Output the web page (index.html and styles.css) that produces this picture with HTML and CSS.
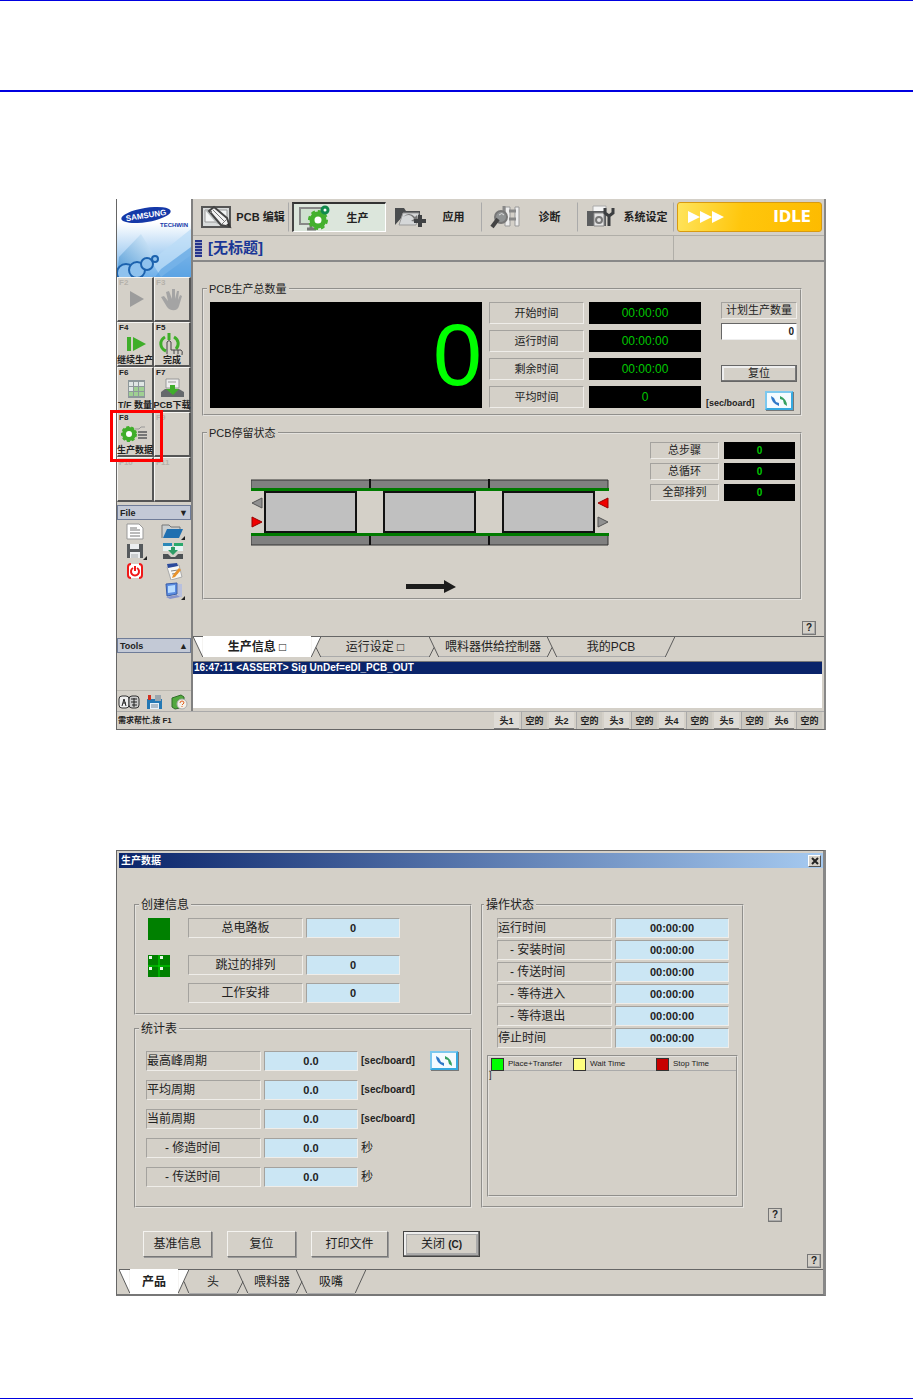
FILE: index.html
```html
<!DOCTYPE html>
<html lang="zh-CN">
	<head>
		<meta charset="UTF-8">
		<title>生产数据</title>
		<link rel="stylesheet" href="styles.css">
	</head>
	<body>
		<header class="page-head"></header>
		<main>
			<!-- 主窗口 -->
			<section class="window app">
				<aside class="sidebar">
					<svg class="logo" viewBox="0 0 74 78" preserveAspectRatio="none">
						<defs>
							<linearGradient id="sky" x1="0" y1="0" x2="0" y2="1">
								<stop offset="0.3" stop-color="#fff"/>
								<stop offset="1" stop-color="#6fb0ea"/>
							</linearGradient>
							<linearGradient id="beam" x1="0" y1="1" x2="1" y2="0">
								<stop offset="0" stop-color="#3f8fd0"/>
								<stop offset="1" stop-color="#e4f2fc"/>
							</linearGradient>
						</defs>
						<rect width="74" height="78" fill="url(#sky)"/>
						<path d="M2 58L24 35L37 56L10 78H0z" fill="url(#beam)" opacity="0.8"/>
						<path d="M34 62L74 30V56L44 78z" fill="#b9dcf6" opacity="0.7"/>
						<path d="M44 70L74 48V78H38z" fill="#4f9be0" opacity="0.6"/>
						<g fill="#8fc2ee" stroke="#1c62ae" stroke-width="2">
							<circle cx="9" cy="74" r="9"/>
							<circle cx="20" cy="71" r="8"/>
							<circle cx="30" cy="65" r="6"/>
							<circle cx="38" cy="60" r="3"/>
						</g>
						<ellipse cx="29" cy="16" rx="25" ry="7" fill="#1438a8" transform="rotate(-9 29 16)"/>
						<text x="29" y="19" class="logo-name" transform="rotate(-9 29 16)">SAMSUNG</text>
						<text x="71" y="28" class="logo-sub">TECHWIN</text>
					</svg>
					<div class="keys">
						<button class="key off"><b>F2</b>
							<svg width="34" height="26" viewBox="0 0 34 26"><path d="M12 3L26 11L12 19z" fill="#9c9c9c"/></svg>
						</button>
						<button class="key off"><b>F3</b>
							<svg width="34" height="26" viewBox="0 0 34 26"><path d="M6 9l3-1 4 5-2-9 3-1 3 8V1h3v10l2-8h2l-1 9 2-5 2 1-3 10c-1 5-8 6-12 1z" fill="#a4a4a4"/></svg>
						</button>
						<button class="key"><b>F4</b>
							<svg width="34" height="22" viewBox="0 0 34 22"><path d="M9 4h4v14H9zM15 4L28 11L15 18z" fill="#3fae2a"/></svg>
							<span>继续生产</span>
						</button>
						<button class="key"><b>F5</b>
							<svg width="34" height="22" viewBox="0 0 34 22" fill="none">
								<path d="M10 4a9 8 0 0 0 1 14M19 4a9 8 0 0 1 2 12" stroke="#3fae2a" stroke-width="3"/>
								<path d="M14 0v7" stroke="#3fae2a" stroke-width="3"/>
								<path d="M12 21V9q2-3 4 0v8h10q2 1 1 5M19 17v4M23 17v4" stroke="#444"/>
							</svg>
							<span>完成</span>
						</button>
						<button class="key"><b>F6</b>
							<svg width="34" height="22" viewBox="0 0 34 22">
								<rect x="10" y="2" width="17" height="18" fill="#8d979a"/>
								<path d="M11 4h4v4h-4zM16 4h4v4h-4zM21 4h5v4h-5zM11 9h4v4h-4z" fill="#dfe6e4"/>
								<path d="M16 9h4v4h-4zM21 9h5v4h-5zM11 14h4v4h-4zM16 14h4v4h-4zM21 14h5v4h-5z" fill="#9fd092"/>
							</svg>
							<span>T/F 数量</span>
						</button>
						<button class="key"><b>F7</b>
							<svg width="34" height="22" viewBox="0 0 34 22">
								<path d="M11 1h13v9H11z" fill="#eee" stroke="#999"/>
								<path d="M6 14l4-3h3l3 4h3l3-4h2l5 3v5H6z" fill="#66696c"/>
								<path d="M15 7h5v4h4l-6 6-7-6h4z" fill="#3fae2a"/>
								<path d="M13 4h8" stroke="#999"/>
							</svg>
							<span>PCB下载</span>
						</button>
						<button class="key marked"><b>F8</b>
							<svg width="34" height="22" viewBox="0 0 34 22" fill="none">
								<circle cx="11" cy="11" r="5" fill="#fff" stroke="#3fae2a" stroke-width="4"/>
								<circle cx="11" cy="11" r="7" stroke="#3fae2a" stroke-width="2" stroke-dasharray="3 2"/>
								<path d="M17 6h4l2-2h4" stroke="#999"/>
								<path d="M20 9h9M20 12h9M20 15h9" stroke="#777" stroke-width="2"/>
							</svg>
							<span>生产数据</span>
						</button>
						<button class="key off"><b>F9</b></button>
						<button class="key off"><b>F10</b></button>
						<button class="key off"><b>F11</b></button>
					</div>
					<button class="side-bar">File<i>▼</i></button>
					<div class="side-icons">
						<svg viewBox="0 0 24 18"><path d="M4 2h12l4 4v11H4z" fill="#fff" stroke="#999"/><path d="M7 6h7M7 8h10M7 11h10M7 14h10" stroke="#777"/></svg>
						<svg viewBox="0 0 24 18"><path d="M1 16V3h7l2 2h9v3" fill="#c9ced0" stroke="#777"/><path d="M2 16L6 7h16l-4 9z" fill="#1f6fb0"/><path d="M24 14v4h-4z" fill="#222"/></svg>
						<svg viewBox="0 0 24 18"><path d="M4 2h16v14H4z" fill="#55595c"/><path d="M7 2h9v5H7zM7 10h10v6H7z" fill="#eceef0"/><path d="M8 12h7v4h-7z" fill="#c9ccce"/><path d="M24 14v4h-4z" fill="#222"/></svg>
						<svg viewBox="0 0 24 18"><path d="M2 1h9v8H2zM13 1h9v8h-9z" fill="#e6f4f4"/><path d="M2 1h9v3H2z" fill="#2a88b8"/><path d="M13 1h9v3h-9z" fill="#2aa86c"/><path d="M2 12h5l3 3h4l3-3h5v5H2z" fill="#4c5154"/><path d="M10 5h4v3h3l-5 5-5-5h3z" fill="#2e9c66"/></svg>
						<svg viewBox="0 0 24 18" fill="none"><rect x="5" y="2" width="14" height="14" rx="3" fill="#fff"/><path d="M8 2q-3 0-3 3v8q0 3 3 3M16 2q3 0 3 3v8q0 3-3 3" stroke="#f01818" stroke-width="2"/><path d="M10 6a4 4 0 1 0 4 0M12 4v5" stroke="#f01818" stroke-width="2"/></svg>
						<svg viewBox="0 0 24 18"><path d="M6 5l12-2 3 12-11 3z" fill="#f7f7f4" stroke="#aaa"/><path d="M6 2l10-1 1 3-10 2z" fill="#2b4a9c"/><path d="M10 9l7-1M11 12l6-1" stroke="#888"/><path d="M18 6l2 2-6 7-3 1 1-3z" fill="#e8932c"/></svg>
						<span></span>
						<svg viewBox="0 0 24 18"><path d="M5 2l11-1v11l-10 2z" fill="#5b8ce0" stroke="#3a5da8"/><path d="M7 4l7-1v7l-7 1z" fill="#b9dcff"/><path d="M17 2h4v13h-4z" fill="#b8c0de"/><path d="M5 15l11-2 3 2-10 2z" fill="#8694cc"/><path d="M24 14v4h-4z" fill="#222"/></svg>
					</div>
					<button class="side-bar tools">Tools<i>▲</i></button>
					<div class="tray">
						<svg width="22" height="16" viewBox="0 0 22 16"><rect x="1" y="2" width="10" height="12" rx="3" fill="#eee" stroke="#333"/><rect x="11" y="2" width="10" height="12" rx="3" fill="#ccc" stroke="#333"/><path d="M4 12l2-7 2 7M5 9h3M13 5h6M13 8h6M14 11h5M16 4v9" fill="none" stroke="#222"/></svg>
						<svg width="18" height="16" viewBox="0 0 18 16"><path d="M1 5h15v10H1z" fill="#2478b4"/><path d="M4 9h9v6H4z" fill="#e8f2fa"/><path d="M5 11h7M5 13h7" stroke="#789"/><path d="M9 1h6v6H9z" fill="#9aa6ae"/><path d="M2 1h3v5H2z" fill="#d03020"/></svg>
						<svg width="18" height="16" viewBox="0 0 18 16"><path d="M2 4l9-3 3 2v10l-9 2-3-2z" fill="#52a83e" stroke="#2f6d28"/><circle cx="12" cy="10" r="5" fill="#f4f0e8" stroke="#aaa"/><path d="M10 9q0-2 2-2t2 2l-2 2M12 12v1" fill="none" stroke="#e06020"/></svg>
					</div>
				</aside>
				<div class="work">
					<nav class="toolbar">
						<button class="tool">
							<svg width="32" height="24" viewBox="0 0 32 24"><path d="M1 2h28v20H1z" fill="#d9dcdc" stroke="#555" stroke-width="2"/><path d="M4 5h22v12H4z" fill="#f3f5f5" stroke="#999"/><path d="M4 5l12 14h10L12 5z" fill="#b9bdbd"/><path d="M8 6l5-4 13 11 3 9-9-2z" fill="#f2f2f2" stroke="#444" stroke-width="2"/><path d="M12 5l12 12M9 8l2-2M21 19l5-5" stroke="#777"/><path d="M25 20l4 2-1-4z" fill="#333"/></svg>
							<span>PCB 编辑</span>
						</button>
						<button class="tool pressed">
							<svg width="32" height="26" viewBox="0 0 32 26" fill="none"><path d="M2 3h22v16H2z" fill="#cfe0cf" stroke="#888" stroke-width="2"/><path d="M9 24h9M13 19v4" stroke="#777" stroke-width="3"/><circle cx="20" cy="15" r="6" fill="#fff" stroke="#44b02e" stroke-width="5"/><circle cx="20" cy="15" r="9" stroke="#44b02e" stroke-width="2" stroke-dasharray="4 3"/><circle cx="27" cy="5" r="3" fill="#fff" stroke="#108a4c" stroke-width="3"/></svg>
							<span>生产</span>
						</button>
						<button class="tool">
							<svg width="32" height="24" viewBox="0 0 32 24"><path d="M1 20V3h9l2 3h14v5H9z" fill="#4a4c4e"/><path d="M5 20l4-12h16l-3 12z" fill="#d5d7d8" stroke="#999"/><path d="M9 12q7-5 11 2l-3 2 7 1-1-7-2 2q-6-6-12 0z" fill="#777"/><path d="M20 14h4v-4h4v4h4v4h-4v4h-4v-4h-4z" fill="#3f4143"/></svg>
							<span>应用</span>
						</button>
						<button class="tool">
							<svg width="32" height="24" viewBox="0 0 32 24" fill="none"><path d="M15 2h5v19h-5zM25 2h4v19h-4z" fill="#eee" stroke="#999"/><path d="M19 6h7M19 14h7M14 9V1" stroke="#888" stroke-width="3"/><circle cx="11" cy="12" r="6" fill="#909394" stroke="#777" stroke-width="2"/><path d="M8 14l-6 8" stroke="#444" stroke-width="4"/><path d="M9 10q3-3 5 0" stroke="#ddd"/></svg>
							<span>诊断</span>
						</button>
						<button class="tool">
							<svg width="32" height="24" viewBox="0 0 32 24" fill="none"><path d="M7 1h13v7H7z" fill="#f4f4f4" stroke="#aaa"/><path d="M1 6h19v15H1z" fill="#5b5d5f"/><path d="M8 8h10v13H8z" fill="#e2e2e2" stroke="#888"/><circle cx="13" cy="15" r="3" stroke="#777" stroke-width="2"/><path d="M19 3v5l4 3 4-3V3M23 10v11" stroke="#3c3e40" stroke-width="3"/></svg>
							<span>系统设定</span>
						</button>
						<div class="idle">
							<svg width="38" height="14" viewBox="0 0 38 14"><path d="M0 1l12 6-12 6zM12 1l12 6-12 6zM24 1l12 6-12 6z" fill="#fff"/></svg>
							<strong>IDLE</strong>
						</div>
					</nav>
					<div class="doc-title"><i></i><h1>[无标题]</h1></div>
					<div class="panel">
						<fieldset class="totals">
							<legend>PCB生产总数量</legend>
							<div class="counter">0</div>
							<div class="times">
								<span class="sunk">开始时间</span><output>00:00:00</output>
								<span class="sunk">运行时间</span><output>00:00:00</output>
								<span class="sunk">剩余时间</span><output>00:00:00</output>
								<span class="sunk">平均时间</span><output>0</output>
							</div>
							<div class="plan">
								<label class="sunk" for="plan">计划生产数量</label>
								<input id="plan" type="text" value="0">
								<button class="btn reset">复位</button>
								<div class="plan-unit"><span>[sec/board]</span>
									<button class="swap" aria-label="切换"><svg width="20" height="12" viewBox="0 0 20 12"><path d="M2 1q0 7 8 10V8L7 7 5 3z" fill="#2f78c8"/><path d="M18 11q0-7-7-10v3l3 1 1 4z" fill="#35a060"/></svg></button>
								</div>
							</div>
						</fieldset>
						<fieldset class="stay">
							<legend>PCB停留状态</legend>
							<svg class="conveyor" width="358" height="114" viewBox="0 0 358 114">
								<g stroke="#333">
									<path d="M0 1h357v10H0zM0 56h357v10H0z" fill="#808080"/>
									<path d="M119 0v12M238 0v12M119 54v12M238 54v12" stroke="#111" stroke-width="2"/>
								</g>
								<path d="M0 9h358v3H0zM0 54h358v3H0z" fill="#007a00"/>
								<g fill="#c0c0c0" stroke="#111" stroke-width="2">
									<path d="M14 13h91v40H14zM133 13h91v40h-91zM252 13h91v40h-91z"/>
								</g>
								<path d="M1 24l10-5v10zM347 38l10 5-10 5z" fill="#909090" stroke="#555"/>
								<path d="M1 38l10 5-10 5zM357 19v10l-10-5z" fill="#f00000" stroke="#900"/>
								<path d="M155 105h38v-4l12 7-12 6v-4h-38z" fill="#1c1c1c"/>
							</svg>
							<div class="steps">
								<span class="sunk">总步骤</span><output>0</output>
								<span class="sunk">总循环</span><output>0</output>
								<span class="sunk">全部排列</span><output>0</output>
							</div>
						</fieldset>
						<button class="help">?</button>
					</div>
					<nav class="tabs">
						<svg width="10" height="21" viewBox="0 0 10 21"><path d="M0 0h10v21z" fill="#fff"/><path d="M0 0l10 21" stroke="#555"/></svg>
						<button class="tab on">生产信息 □</button>
						<svg width="10" height="21" viewBox="0 0 10 21"><path d="M0 0h10L0 21z" fill="#fff"/><path d="M10 0L0 21M5 11l5 10" stroke="#555"/></svg>
						<button class="tab">运行设定 □</button>
						<svg width="10" height="21" viewBox="0 0 10 21"><path d="M0 0l10 21M5 11L0 21" stroke="#555"/></svg>
						<button class="tab">喂料器供给控制器</button>
						<svg width="10" height="21" viewBox="0 0 10 21"><path d="M0 0l10 21M5 11L0 21" stroke="#555"/></svg>
						<button class="tab">我的PCB</button>
						<svg width="10" height="21" viewBox="0 0 10 21"><path d="M10 0L0 21" stroke="#555"/></svg>
					</nav>
					<div class="log"><p>16:47:11 &lt;ASSERT&gt; Sig UnDef=eDI_PCB_OUT</p></div>
				</div>
				<footer class="status">
					<span class="hint">需求帮忙,按 F1</span>
					<span class="head">头1</span><span class="state">空的</span>
					<span class="head">头2</span><span class="state">空的</span>
					<span class="head">头3</span><span class="state">空的</span>
					<span class="head">头4</span><span class="state">空的</span>
					<span class="head">头5</span><span class="state">空的</span>
					<span class="head">头6</span><span class="state">空的</span>
				</footer>
			</section>

			<!-- 生产数据对话框 -->
			<section class="window dialog">
				<div class="caption"><h2>生产数据</h2>
					<button class="close" aria-label="关闭窗口"><svg width="8" height="8" viewBox="0 0 8 8"><path d="M1 1l6 6M7 1l-6 6" stroke="#222" stroke-width="2"/></svg></button>
				</div>
				<div class="groups">
					<div>
						<fieldset class="made">
							<legend>创建信息</legend>
							<div class="line"><svg width="22" height="22"><path d="M0 0h22v22H0z" fill="#008000"/></svg><span class="sunk">总电路板</span><output>0</output></div>
							<div class="line"><svg width="22" height="22"><path d="M0 0h22v22H0z" fill="#008000"/><path d="M11 0v22M0 11h22" stroke="#00e000"/><path d="M1 1h3v3H1zM12 1h3v3h-3zM1 12h3v3H1zM12 12h3v3h-3z" fill="#e8f8e8"/></svg><span class="sunk">跳过的排列</span><output>0</output></div>
							<div class="line"><i></i><span class="sunk">工作安排</span><output>0</output></div>
						</fieldset>
						<fieldset class="stats">
							<legend>统计表</legend>
							<div class="line"><span class="sunk">最高峰周期</span><output>0.0</output><b>[sec/board]</b>
								<button class="swap" aria-label="切换"><svg width="20" height="12" viewBox="0 0 20 12"><path d="M2 1q0 7 8 10V8L7 7 5 3z" fill="#2f78c8"/><path d="M18 11q0-7-7-10v3l3 1 1 4z" fill="#35a060"/></svg></button>
							</div>
							<div class="line"><span class="sunk">平均周期</span><output>0.0</output><b>[sec/board]</b></div>
							<div class="line"><span class="sunk">当前周期</span><output>0.0</output><b>[sec/board]</b></div>
							<div class="line"><span class="sunk sub">- 修造时间</span><output>0.0</output><em>秒</em></div>
							<div class="line"><span class="sunk sub">- 传送时间</span><output>0.0</output><em>秒</em></div>
						</fieldset>
					</div>
					<fieldset class="state-box">
						<legend>操作状态</legend>
						<div class="line"><span class="sunk">运行时间</span><output>00:00:00</output></div>
						<div class="line"><span class="sunk sub">- 安装时间</span><output>00:00:00</output></div>
						<div class="line"><span class="sunk sub">- 传送时间</span><output>00:00:00</output></div>
						<div class="line"><span class="sunk sub">- 等待进入</span><output>00:00:00</output></div>
						<div class="line"><span class="sunk sub">- 等待退出</span><output>00:00:00</output></div>
						<div class="line"><span class="sunk">停止时间</span><output>00:00:00</output></div>
						<div class="chart">
							<ul>
								<li class="place">Place+Transfer</li>
								<li class="wait">Wait Time</li>
								<li class="stop">Stop Time</li>
							</ul>
							<span>]</span>
						</div>
					</fieldset>
					<div class="side-help"><button class="help">?</button></div>
				</div>
				<div class="actions">
					<button class="btn">基准信息</button>
					<button class="btn">复位</button>
					<button class="btn wide">打印文件</button>
					<button class="btn wide default">关闭 <b>(C)</b></button>
					<button class="help">?</button>
				</div>
				<nav class="tabs">
					<svg width="11" height="24" viewBox="0 0 11 24"><path d="M0 0h11v24z" fill="#fff"/><path d="M0 0l11 24" stroke="#555"/></svg>
					<button class="tab on">产品</button>
					<svg width="11" height="24" viewBox="0 0 11 24"><path d="M0 0h11L0 24z" fill="#fff"/><path d="M11 0L0 24M6 12l5 12" stroke="#555"/></svg>
					<button class="tab">头</button>
					<svg width="11" height="24" viewBox="0 0 11 24"><path d="M0 0l11 24M6 12L0 24" stroke="#555"/></svg>
					<button class="tab">喂料器</button>
					<svg width="11" height="24" viewBox="0 0 11 24"><path d="M0 0l11 24M6 12L0 24" stroke="#555"/></svg>
					<button class="tab">吸嘴</button>
					<svg width="11" height="24" viewBox="0 0 11 24"><path d="M11 0L0 24" stroke="#555"/></svg>
				</nav>
			</section>
		</main>
		<footer class="page-foot"></footer>
	</body>
</html>
```
FILE: styles.css
```css
* {
	margin: 0;
	padding: 0;
	box-sizing: border-box;
}
body {
	display: flex;
	flex-direction: column;
	min-height: 100vh;
	background: #fff;
	color: #222;
	font-family: "Liberation Sans", "Noto Sans CJK SC", sans-serif;
	font-size: 11px;
	line-height: 14px;
}
button, input {
	font: inherit;
	color: inherit;
}
button {
	background: #d4d0c8;
	border: 0;
	white-space: nowrap;
}
svg {
	display: block;
	flex: none;
}
/*页眉页脚的蓝线*/
.page-head {
	height: 92px;
	border-top: 1px solid #0000e0;
	border-bottom: 2px solid #0000e0;
}
.page-foot {
	margin-top: auto;
	border-top: 1px solid #0000e0;
}
main {
	padding: 107px 87px 60px 116px;
}
.window {
	background: #d4d0c8;
	border: 1px solid #666;
}

/*公用控件*/
fieldset {
	min-width: 0;
	border: 2px groove #e4e2de;
}
legend {
	margin-left: -3px;
	padding: 0 2px;
}
.sunk {
	border: 1px solid;
	border-color: #a4a29e #efede9 #efede9 #a4a29e;
	text-align: center;
	white-space: nowrap;
}
output {
	text-align: center;
}
.btn {
	border: 1px solid;
	border-color: #f4f3f0 #777 #777 #f4f3f0;
	box-shadow: 1px 1px 0 #999;
}
.help {
	width: 14px;
	height: 14px;
	border: 1px solid #777;
	box-shadow: inset -1px -1px 0 #aaa;
	font-size: 10px;
	font-weight: bold;
	line-height: 12px;
}
.swap {
	display: flex;
	align-items: center;
	justify-content: center;
	width: 28px;
	height: 19px;
	background: #f4fbff;
	border: 2px solid #35a9e0;
	border-top-color: #7cc8ee;
	border-left-color: #7cc8ee;
	box-shadow: 1px 1px 0 #777;
}
.tabs {
	display: flex;
}
.tabs svg, .tab {
	border-top: 1px solid #666;
	fill: none;
}
.tab {
	width: 108px;
	border-bottom: 1px solid #aaa;
	font-size: 12px;
	line-height: 18px;
}
.tab.on {
	background: #fff;
	border-color: #fff;
	font-weight: bold;
}
.tabs::after {
	content: "";
	flex: 1;
	border-top: 1px solid #666;
}

/*主窗口*/
.app {
	display: grid;
	grid-template-columns: 76px 1fr;
	margin-bottom: 120px;
	border-width: 0 2px 1px 1px;
	border-right-color: #888;
}
.sidebar {
	display: flex;
	flex-direction: column;
	border-right: 2px solid #808080;
}
.logo {
	width: 100%;
	height: 78px;
}
.logo-name, .logo-sub {
	font-weight: bold;
	font-size: 8px;
	fill: #fff;
	text-anchor: middle;
}
.logo-sub {
	font-size: 6px;
	fill: #1438a8;
	text-anchor: end;
}
.keys {
	display: grid;
	grid-template-columns: repeat(2, minmax(0, 1fr));
	grid-auto-rows: 45px;
	margin-bottom: 3px;
}
.key {
	position: relative;
	display: flex;
	flex-direction: column;
	align-items: center;
	border: 1px solid;
	border-color: #f6f5f2 #555 #555 #f6f5f2;
	border-width: 1px 2px 2px 1px;
	font-size: 9px;
	font-weight: bold;
	line-height: 10px;
}
.key b {
	align-self: flex-start;
	padding-left: 1px;
	font-size: 8px;
}
.key.off b {
	color: #b4b1aa;
}
/*红框标出要点的按键*/
.key.marked::after {
	content: "";
	position: absolute;
	z-index: 1;
	top: -3px;
	right: -11px;
	bottom: -7px;
	left: -8px;
	border: 3px solid #f00;
}
.side-bar {
	display: flex;
	justify-content: space-between;
	align-items: center;
	height: 15px;
	padding: 0 2px;
	background: #c3c9d6;
	border: 1px solid #6f7c98;
	font-size: 9px;
	font-weight: bold;
}
.side-bar i {
	font-style: normal;
}
.side-icons {
	display: grid;
	grid-template-columns: 24px 24px;
	grid-auto-rows: 18px;
	gap: 2px 14px;
	padding: 2px 6px;
}
.tools {
	margin-top: auto;
}
.tray {
	display: flex;
	gap: 6px;
	margin-top: 37px;
	padding: 3px 0 1px 1px;
	border-top: 1px solid #bbb8b0;
}
.work {
	min-width: 0;
	padding-bottom: 3px;
}
.toolbar {
	display: flex;
	height: 37px;
	padding: 3px 2px 3px 3px;
	border-bottom: 1px solid #b0aea8;
}
.tool {
	display: flex;
	flex: 1;
	align-items: center;
	margin-right: 3px;
	padding-left: 4px;
	border: 1px solid;
	border-color: transparent #aaa transparent transparent;
	font-weight: bold;
}
.tool span {
	flex: 1;
	text-align: center;
}
.tool.pressed {
	background: #dce6dc;
	border-color: #333 #fff #fff #444;
	border-width: 2px 1px 1px 2px;
}
.idle {
	display: flex;
	align-items: center;
	justify-content: space-between;
	width: 145px;
	padding: 0 10px;
	background: linear-gradient(100deg, #ffe45c, #ffc60c 45%, #fdbb00);
	border: 1px solid #d89a10;
	border-radius: 3px;
	color: #fff;
}
.idle strong {
	font-family: "DejaVu Sans", sans-serif;
	font-size: 15px;
}
.doc-title {
	display: flex;
	align-items: center;
	gap: 6px;
	height: 26px;
	padding: 0 2px;
	border-bottom: 2px solid #888;
}
.doc-title::after {
	content: "";
	width: 148px;
	height: 24px;
	margin-left: auto;
	border-left: 1px solid #b0aea8;
}
.doc-title i {
	width: 7px;
	height: 17px;
	background: repeating-linear-gradient(#26348c 0 2px, #9aa0c4 2px 3px);
}
.doc-title h1 {
	color: #1a3796;
	font-size: 15px;
	line-height: 20px;
}
.panel {
	display: flex;
	flex-direction: column;
	height: 374px;
	padding: 20px 22px 0 9px;
}
.totals {
	display: grid;
	grid-template-columns: 1fr 212px 97px;
	height: 134px;
	padding: 6px 2px 4px 6px;
}
.counter {
	height: 106px;
	margin-right: 7px;
	background: #000;
	color: #0f0;
	font-size: 88px;
	line-height: 106px;
	text-align: right;
}
.times {
	display: grid;
	grid-template-columns: 95px 112px;
	gap: 6px 5px;
	align-content: start;
	line-height: 20px;
}
.times output, .steps output {
	background: #000;
	color: #00c800;
}
.times output {
	font-size: 12px;
	line-height: 22px;
}
.plan {
	display: flex;
	flex-direction: column;
	align-items: flex-end;
	height: 108px;
	padding-right: 1px;
}
.plan .sunk {
	width: 76px;
	height: 17px;
}
.plan input {
	width: 76px;
	height: 17px;
	margin-top: 4px;
	padding-right: 2px;
	border: 1px solid;
	border-color: #666 #eee #eee #666;
	font-size: 10px;
	font-weight: bold;
	text-align: right;
}
.reset {
	width: 76px;
	height: 17px;
	margin-top: 25px;
	border-color: #666;
	box-shadow: inset -1px -1px 0 #777, inset 2px 2px 0 #eee;
	line-height: 13px;
}
.plan-unit {
	display: flex;
	align-items: center;
	align-self: stretch;
	justify-content: space-between;
	margin-top: 9px;
	padding: 0 4px 0 5px;
	font-size: 9px;
	font-weight: bold;
}
.plan-unit span {
	padding-top: 5px;
}
.stay {
	display: flex;
	justify-content: space-between;
	height: 174px;
	margin-top: 10px;
	padding: 0 5px 0 6px;
}
.conveyor {
	margin: 39px 0 0 41px;
}
.steps {
	display: grid;
	grid-template-columns: 69px 71px;
	grid-auto-rows: 17px;
	gap: 4px 5px;
	margin-top: 2px;
}
.steps output {
	font-size: 10px;
	font-weight: bold;
	line-height: 17px;
}
.panel .help {
	align-self: flex-end;
	margin: auto -14px 1px 0;
}
.app .tabs {
	height: 21px;
}
.log {
	height: 47px;
	margin: 4px 2px 0 0;
	background: #fff;
	border-top: 1px solid #777;
}
.log p {
	padding-left: 1px;
	background: #0a246a;
	color: #fff;
	font-size: 10px;
	font-weight: bold;
	line-height: 12px;
}
.status {
	display: flex;
	grid-column: 1 / -1;
	gap: 2px;
	height: 18px;
	padding-right: 2px;
	border-top: 1px solid #aaa;
	font-size: 9px;
	font-weight: bold;
	line-height: 18px;
}
.hint {
	flex: 1;
	padding-left: 1px;
	font-size: 8px;
}
.head, .state {
	width: 25px;
	background: #dedbd5;
	border-bottom: 1px solid #777;
	text-align: center;
}
.state {
	width: 26px;
	background: #ccc9c1;
	border: 0;
	border-left: 1px solid #aaa;
}

/*对话框*/
.dialog {
	padding: 2px 0 0 2px;
	border-width: 1px 3px 2px 1px;
	border-color: #666 #888 #777 #666;
	font-size: 12px;
}
.caption {
	display: flex;
	align-items: center;
	justify-content: space-between;
	height: 15px;
	padding: 0 2px;
	background: linear-gradient(90deg, #0a246a, #a6caf0);
	color: #fff;
}
.caption h2 {
	font-size: 10px;
}
.close {
	display: flex;
	align-items: center;
	justify-content: center;
	width: 13px;
	height: 12px;
	border: 1px solid;
	border-color: #fff #555 #555 #fff;
}
.groups {
	display: grid;
	grid-template-columns: 338fr 263fr 70px;
	gap: 9px;
	padding: 30px 0 0 15px;
}
.line {
	display: flex;
	height: 20px;
	line-height: 18px;
}
.line .sunk {
	width: 115px;
	margin-right: 3px;
}
.line output {
	width: 94px;
	background: #cbe6f4;
	border: 1px solid;
	border-color: #a4a29e #efede9 #efede9 #a4a29e;
	font-size: 11px;
	font-weight: bold;
}
.made {
	height: 117px;
	padding: 6px 12px;
}
.made legend {
	margin-left: -9px;
}
.made .line {
	gap: 0 18px;
	margin-bottom: 8px;
}
.made .line:first-of-type {
	margin-bottom: 17px;
}
.made .line output {
	margin-left: -18px;
}
.made i {
	width: 22px;
}
.stats {
	height: 186px;
	margin-top: 7px;
	padding: 15px 10px;
}
.stats legend {
	margin-left: -7px;
}
.stats .line {
	margin-bottom: 9px;
}
.stats .sunk, .state-box .sunk {
	text-align: left;
}
.line .sub {
	padding-left: 18px;
}
.state-box .sub {
	padding-left: 12px;
}
.line b, .line em {
	padding-left: 3px;
	font-size: 10px;
	font-style: normal;
	line-height: 20px;
}
.line em {
	font-size: 12px;
}
.stats .swap {
	margin: 0 2px 0 auto;
}
.state-box {
	height: 310px;
	padding: 6px 4px;
}
.state-box .line {
	margin: 0 9px 2px 10px;
}
.state-box output {
	flex: 1;
}
.chart {
	height: 142px;
	margin-top: 7px;
	border: 2px groove #e4e2de;
	font-size: 9px;
}
.chart ul {
	display: grid;
	grid-template-columns: 82px 83px 1fr;
	height: 14px;
	border-bottom: 1px solid #aaa;
	list-style: none;
}
.chart li {
	display: flex;
	align-items: center;
	gap: 4px;
	padding-left: 2px;
	font-size: 8px;
	white-space: nowrap;
}
.chart li::before {
	content: "";
	width: 11px;
	height: 11px;
	border: 1px solid #333;
}
.chart .place::before {
	background: #0f0;
}
.chart .wait::before {
	background: #ffff80;
}
.chart .stop::before {
	background: #c80000;
}
.chart span {
	display: block;
	line-height: 9px;
}
.side-help {
	display: flex;
	align-items: flex-end;
	padding-left: 15px;
	margin-bottom: -14px;
}
.actions {
	display: flex;
	gap: 15px;
	padding: 23px 2px 1px 24px;
}
.actions .btn {
	width: 69px;
	height: 26px;
	margin-bottom: 11px;
}
.actions .wide {
	width: 77px;
}
.actions .default {
	border-color: #444;
	box-shadow: inset -1px -1px 0 #777, inset 2px 2px 0 #eee, inset 0 0 0 3px #aaa;
}
.actions .default b {
	font-size: 10px;
}
.actions .help {
	align-self: flex-end;
	margin-left: auto;
}
.dialog .tabs {
	height: 25px;
}
.dialog .tab {
	width: 48px;
	line-height: 22px;
}
```
